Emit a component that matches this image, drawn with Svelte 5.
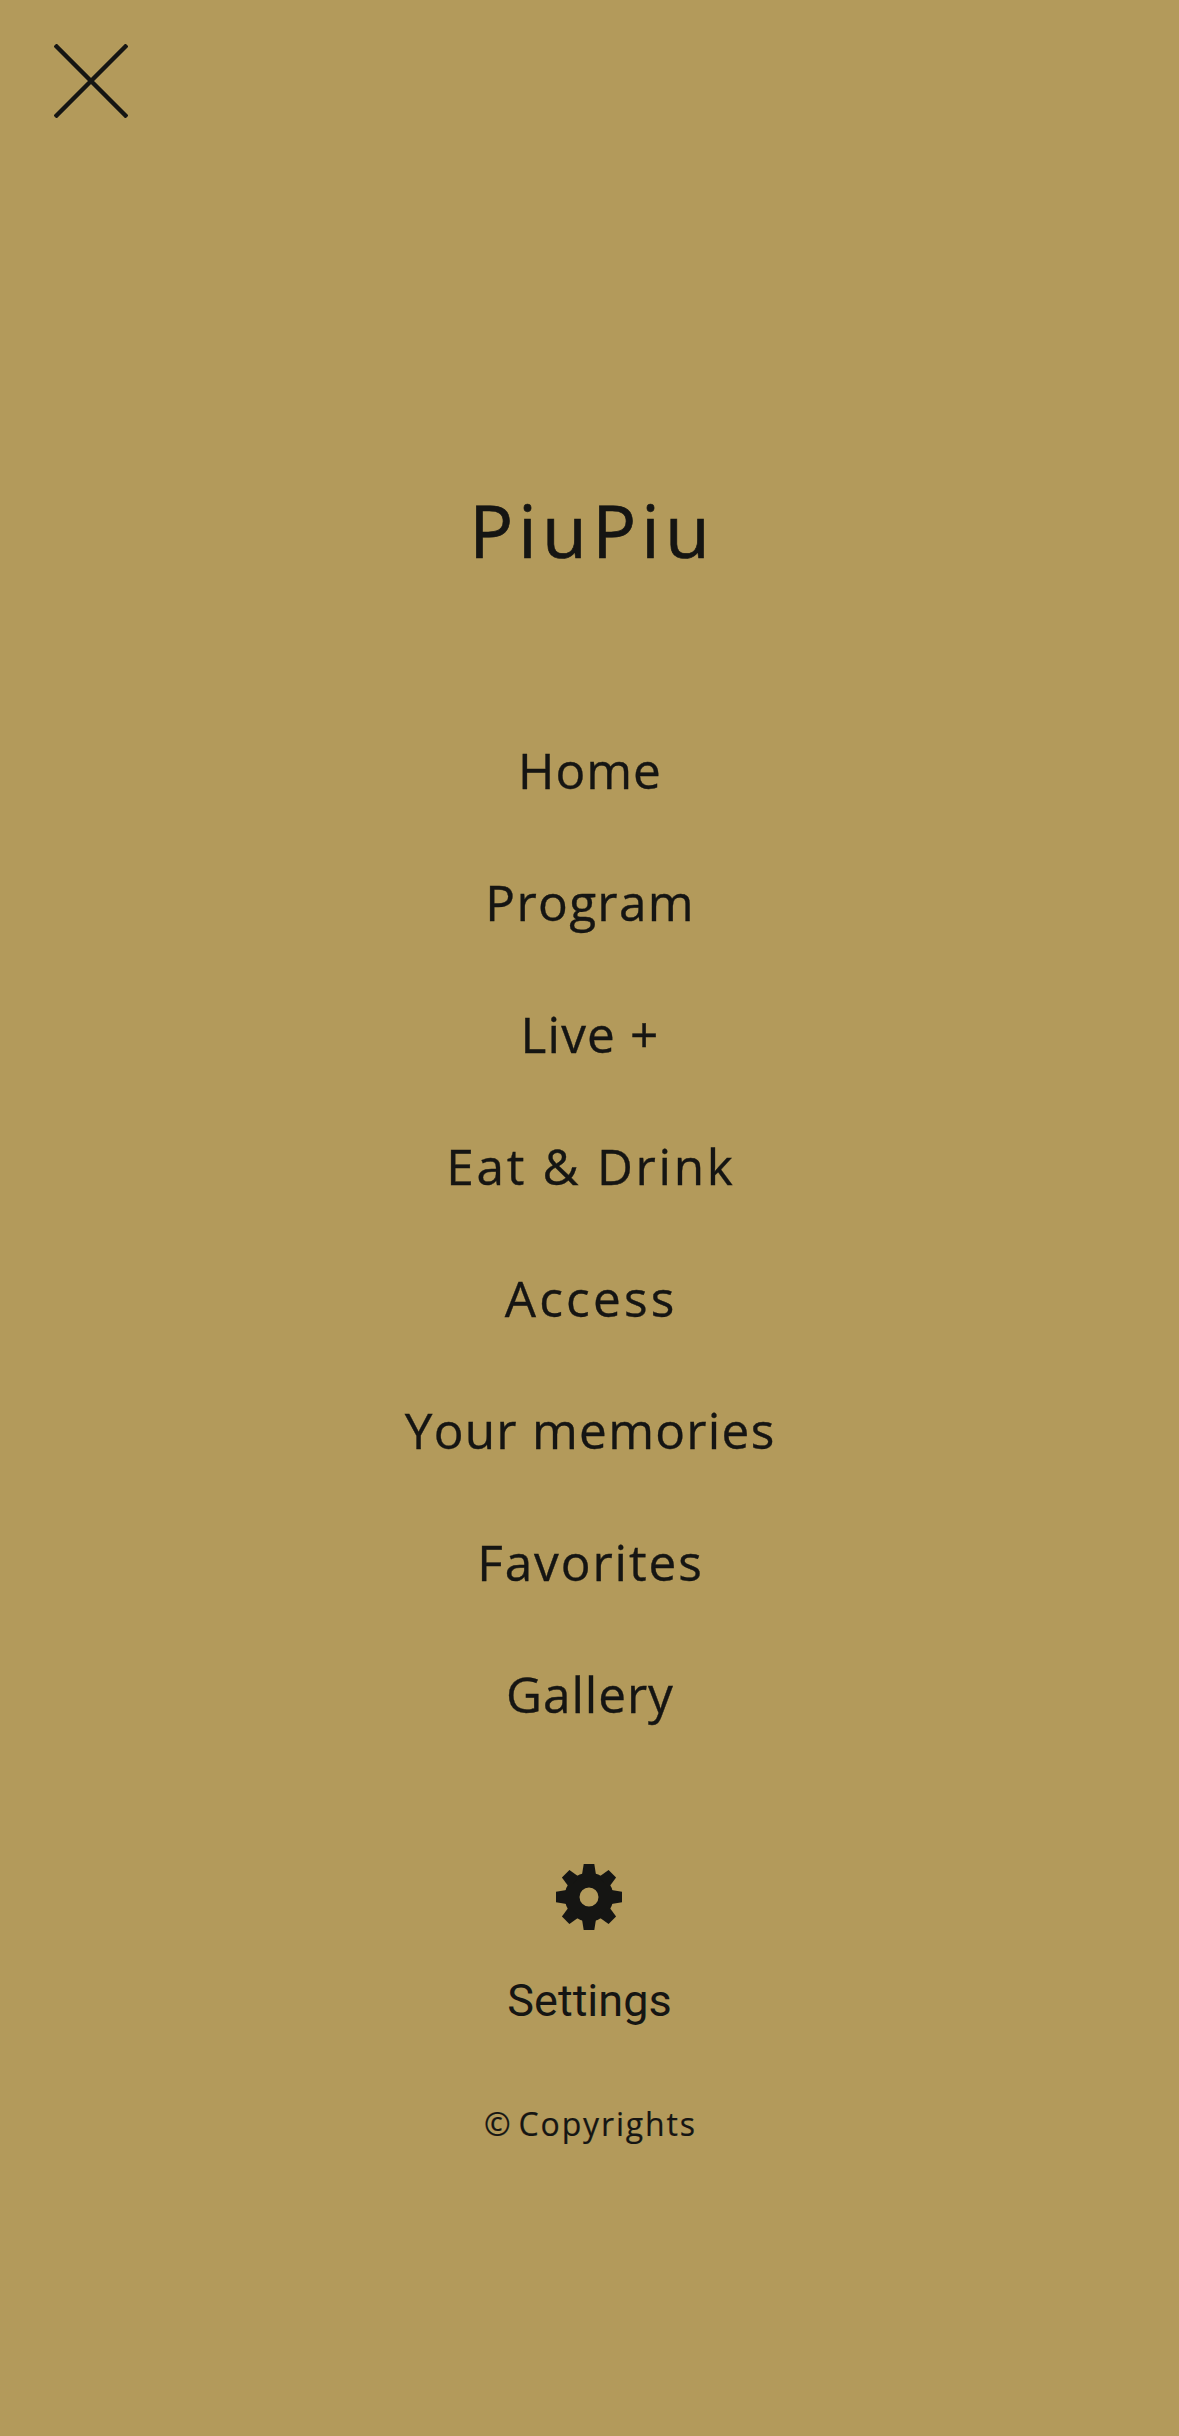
<script>
  const items = [
    { label: 'Home', tracking: 0.97 },
    { label: 'Program', tracking: 1.35 },
    { label: 'Live +', tracking: 1.16 },
    { label: 'Eat & Drink', tracking: 2.71 },
    { label: 'Access', tracking: 3.18 },
    { label: 'Your memories', tracking: 1.28 },
    { label: 'Favorites', tracking: 1.91 },
    { label: 'Gallery', tracking: 0.91 }
  ];
  const angles = [0, 45, 90, 135, 180, 225, 270, 315];
</script>

<div class="screen">
  <header>
    <button class="close" aria-label="Close menu">
      <svg width="74" height="74" viewBox="0 0 74 74">
        <path d="M1 1 73 73M73 1 1 73" stroke="currentColor" stroke-width="4.4" fill="none" />
      </svg>
    </button>
  </header>

  <h1><span>PiuPiu</span></h1>

  <nav>
    {#each items as item}
      <a href="#top"><span style:--tracking="{item.tracking}px">{item.label}</span></a>
    {/each}
  </nav>

  <button class="settings">
    <svg width="66" height="66" viewBox="-33 -33 66 66">
      <circle r="16.9" fill="none" stroke="currentColor" stroke-width="14.8" />
      {#each angles as angle}
        <path d="M-7.2-21-5.3-33H5.3L7.2-21Z" fill="currentColor" transform="rotate({angle})" />
      {/each}
    </svg>
    <span>Settings</span>
  </button>

  <footer><span>© Copyrights</span></footer>
</div>

<style>
  :global(body) {
    background: #b39a5b;
  }
  .screen {
    box-sizing: border-box;
    min-height: 2436px;
    display: flex;
    flex-direction: column;
    align-items: center;
    background: #b39a5b;
    color: #151513;
    font-family: 'Open Sans', sans-serif;
  }
  header {
    box-sizing: border-box;
    width: 100%;
    height: 480px;
    padding: 44px 54px;
  }
  button {
    border: 0;
    padding: 0;
    background: none;
    color: inherit;
  }
  svg {
    display: block;
  }
  span {
    letter-spacing: var(--tracking);
    margin-right: calc(-1 * var(--tracking));
    white-space: nowrap;
  }
  h1 {
    --tracking: 5.3px;
    margin: 0 0 124px;
    font-size: 73px;
    font-weight: 400;
    line-height: 100px;
    -webkit-text-stroke: 0.7px currentColor;
  }
  nav {
    display: flex;
    flex-direction: column;
    align-items: center;
    margin-bottom: 104px;
  }
  nav a {
    color: inherit;
    text-decoration: none;
    font-size: 49.5px;
    line-height: 132px;
    height: 132px;
    -webkit-text-stroke: 0.35px currentColor;
  }
  .settings {
    --tracking: 0px;
    display: flex;
    flex-direction: column;
    align-items: center;
    gap: 45px;
    margin-bottom: 75px;
    font-family: Roboto, sans-serif;
    font-size: 45px;
    line-height: 52px;
  }
  .settings svg {
    margin-right: 1px;
  }
  footer {
    --tracking: 1.85px;
    font-size: 32px;
    line-height: 44px;
    word-spacing: -4px;
    -webkit-text-stroke: 0.2px currentColor;
  }
</style>
